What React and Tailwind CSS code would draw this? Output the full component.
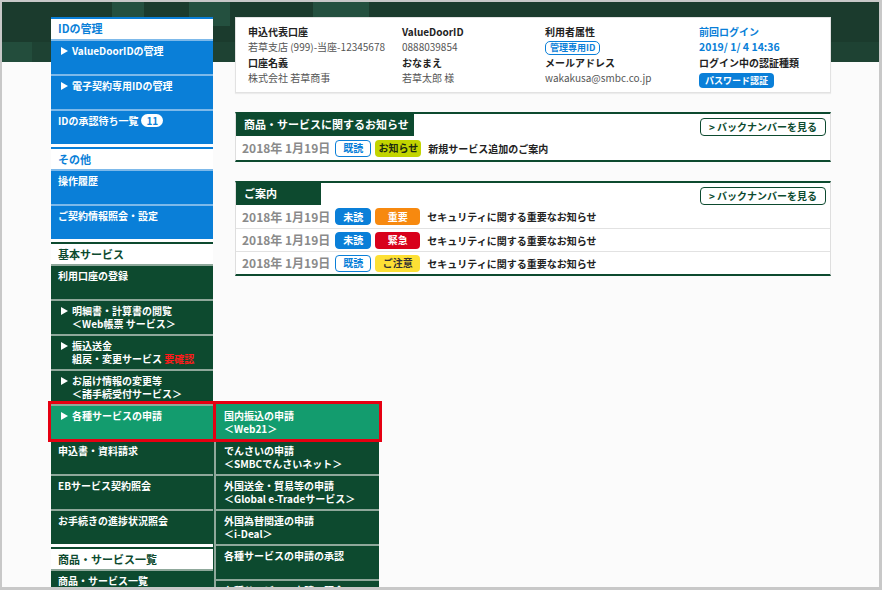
import clsx from "clsx";

function Arrow() {
  return (
    <svg width="7" height="8" viewBox="0 0 7 8" className="mt-[2.5px] shrink-0">
      <path d="M0 0 L7 4 L0 8 Z" fill="#fff" />
    </svg>
  );
}

function SectionHead({ label, tone }) {
  return (
    <div
      className={clsx(
        "mt-[3px] h-[22px] border-t-2 bg-white pl-[7px] text-[11px] font-bold leading-[20px]",
        tone === "blue" ? "border-[#0a7fd8] text-[#0a7fd8]" : "border-[#0d4a2f] text-[#0d4a2f]"
      )}
    >
      {label}
    </div>
  );
}

function NavItem({ tone = "green", arrow, active, children }) {
  return (
    <div
      className={clsx(
        "relative h-[35px] border-t-2 pt-[3px] text-[10px] font-bold leading-[13px] text-white",
        tone === "blue" ? "border-[#7db9ea] bg-[#0a7fd8]" : "border-[#8fa89b] bg-[#0d4a2f]",
        active && "z-10 bg-[#139c6e] outline-[3px] outline-[#e60012] outline-solid",
        arrow ? "flex gap-[4px] pl-[10px]" : "pl-[7px]"
      )}
    >
      {arrow && <Arrow />}
      <div>{children}</div>
    </div>
  );
}

function SubItem({ active, children }) {
  return (
    <div
      className={clsx(
        "relative h-[35px] border-t-2 pl-[8px] pt-[3px] text-[10px] font-bold leading-[13px] text-white",
        active
          ? "z-10 border-[#139c6e] bg-[#139c6e] outline-[3px] outline-[#e60012] outline-solid"
          : "border-[#8fa89b] bg-[#0d4a2f]"
      )}
    >
      {children}
    </div>
  );
}

function Sidebar() {
  return (
    <div className="w-[162px] shrink-0 bg-white">
      <div className="h-[22px] border-t-2 border-[#0a7fd8] bg-white pl-[7px] text-[11px] font-bold leading-[19px] text-[#0a7fd8]">
        IDの管理
      </div>
      <NavItem tone="blue" arrow>
        ValueDoorIDの管理
      </NavItem>
      <NavItem tone="blue" arrow>
        電子契約専用IDの管理
      </NavItem>
      <NavItem tone="blue">
        <span className="flex items-center gap-[3px]">
          IDの承認待ち一覧
          <span className="inline-flex h-[13px] items-center rounded-full bg-white px-[5px] text-[10px] leading-none text-[#0a7fd8]">
            11
          </span>
        </span>
      </NavItem>

      <SectionHead label="その他" tone="blue" />
      <NavItem tone="blue">操作履歴</NavItem>
      <NavItem tone="blue">ご契約情報照会・設定</NavItem>

      <SectionHead label="基本サービス" tone="green" />
      <NavItem>利用口座の登録</NavItem>
      <NavItem arrow>
        明細書・計算書の閲覧
        <br />＜Web帳票 サービス＞
      </NavItem>
      <NavItem arrow>
        振込送金
        <br />
        組戻・変更サービス <span className="text-[#ff1a1a]">要確認</span>
      </NavItem>
      <NavItem arrow>
        お届け情報の変更等
        <br />＜諸手続受付サービス＞
      </NavItem>
      <div className="relative z-10">
        <NavItem arrow active>
          各種サービスの申請
        </NavItem>
        {/* flyout */}
        <div className="absolute left-[162px] top-0 w-[166px] border-l border-[#0d4a2f] bg-[#0d4a2f]">
          <div className="border-l-2 border-[#8fa89b]">
            <SubItem active>
              国内振込の申請
              <br />＜Web21＞
            </SubItem>
            <SubItem>
              でんさいの申請
              <br />＜SMBCでんさいネット＞
            </SubItem>
            <SubItem>
              外国送金・貿易等の申請
              <br />＜Global e-Tradeサービス＞
            </SubItem>
            <SubItem>
              外国為替関連の申請
              <br />＜i-Deal＞
            </SubItem>
            <SubItem>各種サービスの申請の承認</SubItem>
            <SubItem>各種サービスの申請の照会</SubItem>
          </div>
        </div>
      </div>
      <NavItem>申込書・資料請求</NavItem>
      <NavItem>EBサービス契約照会</NavItem>
      <NavItem>お手続きの進捗状況照会</NavItem>

      <SectionHead label="商品・サービス一覧" tone="green" />
      <NavItem>商品・サービス一覧</NavItem>
    </div>
  );
}

function Field({ label, children }) {
  return (
    <div>
      <div className="text-[10px] font-bold leading-[15px] text-[#222]">{label}</div>
      <div className="h-[16px] text-[10px] leading-[15px] text-[#555]">{children}</div>
    </div>
  );
}

function InfoCard() {
  return (
    <div className="grid h-[76px] grid-cols-[154px_143px_154px_1fr] border border-[#e2e2e2] bg-white pl-[12px] pt-[6px] shadow-[0_1px_1px_rgba(0,0,0,0.06)]">
      <div>
        <Field label="申込代表口座">若草支店 (999)-当座-12345678</Field>
        <Field label="口座名義">株式会社 若草商事</Field>
      </div>
      <div>
        <Field label="ValueDoorID">0888039854</Field>
        <Field label="おなまえ">若草太郎 様</Field>
      </div>
      <div>
        <Field label="利用者属性">
          <span className="mt-[1px] inline-flex h-[14px] items-center rounded-[5px] border border-[#0a7fd8] bg-white px-[4px] text-[9px] font-bold leading-none text-[#0a7fd8]">
            管理専用ID
          </span>
        </Field>
        <Field label="メールアドレス">wakakusa@smbc.co.jp</Field>
      </div>
      <div>
        <div className="text-[10px] font-bold leading-[15px] text-[#0a7fd8]">前回ログイン</div>
        <div className="h-[16px] text-[10.5px] font-bold leading-[15px] text-[#0a7fd8]">2019/ 1/ 4 14:36</div>
        <div className="text-[10px] font-bold leading-[15px] text-[#222]">ログイン中の認証種類</div>
        <div className="h-[16px] leading-[15px]">
          <span className="inline-flex h-[15px] items-center rounded-[4px] bg-[#0a7fd8] px-[6px] text-[9px] font-bold leading-none text-white">
            パスワード認証
          </span>
        </div>
      </div>
    </div>
  );
}

const badgeStyles = {
  read: "w-[36px] border border-[#0a7fd8] bg-white text-[#0a7fd8]",
  unread: "w-[36px] border border-[#0a7fd8] bg-[#0a7fd8] text-white",
  info: "w-[46px] bg-[#c2d400] text-[#1b2a10]",
  important: "w-[45px] bg-[#f7890f] text-white",
  urgent: "w-[45px] bg-[#d8001b] text-white",
  caution: "w-[45px] bg-[#fde035] text-[#333]",
};

function Badge({ kind, children }) {
  return (
    <span
      className={clsx(
        "inline-flex h-[17px] shrink-0 items-center justify-center rounded-[4px] text-[10px] font-bold leading-none",
        badgeStyles[kind]
      )}
    >
      {children}
    </span>
  );
}

function NewsRow({ status, statusLabel, kind, kindLabel, text, first, tall }) {
  return (
    <div
      className={clsx(
        "flex items-center pl-[6px]",
        tall ? "h-[24px]" : "h-[23px]",
        !first && "border-t border-[#e2e2e2]"
      )}
    >
      <span className="whitespace-nowrap text-[12px] font-bold text-[#8a8a8a]">2018年 1月19日</span>
      <span className="ml-[5px] flex gap-[4px]">
        <Badge kind={status}>{statusLabel}</Badge>
        <Badge kind={kind}>{kindLabel}</Badge>
      </span>
      <span className="ml-[7px] whitespace-nowrap text-[10px] font-bold text-[#222]">{text}</span>
    </div>
  );
}

function NewsBox({ title, tabWidth, children }) {
  return (
    <div className="border-x border-y-2 border-x-[#dedede] border-y-[#0d4a2f] bg-white">
      <div className="flex items-start justify-between">
        <div
          className={clsx("h-[22px] bg-[#0d4a2f] pl-[8px] text-[11px] font-bold leading-[21px] text-white", tabWidth)}
        >
          {title}
        </div>
        <button className="mr-[4px] mt-[4px] h-[18px] w-[126px] rounded-[4px] border border-[#0d4a2f] bg-white text-[10px] font-bold leading-none text-[#0d4a2f]">
          &gt; バックナンバーを見る
        </button>
      </div>
      {children}
    </div>
  );
}

export default function App() {
  return (
    <div className="h-[590px] w-[882px] overflow-hidden bg-[#c8c8c8] pb-[3px] pl-[2px] pr-[3px] pt-[2px] font-['Noto_Sans_CJK_JP','Noto_Sans',sans-serif]">
      <div className="relative h-full overflow-hidden bg-[#fbfbfb]">
        {/* header band decoration */}
        <svg className="absolute left-0 top-0 h-[60px] w-full" viewBox="0 0 877 60" preserveAspectRatio="none">
          <rect x="0" y="0" width="877" height="60" fill="#1b3b2d" />
          <rect x="0" y="40" width="877" height="20" fill="#1e4233" />
          <rect x="110" y="0" width="32" height="40" fill="#24503f" />
          <rect x="187" y="0" width="41" height="24" fill="#24503f" />
          <rect x="311" y="0" width="56" height="40" fill="#24503f" />
          <rect x="0" y="40" width="30" height="20" fill="#234d3c" />
        </svg>

        <div className="relative flex pl-[49px] pt-[15px]">
          <Sidebar />
          <div className="ml-[22px] w-[596px]">
            <InfoCard />
            <div className="mt-[19px]">
              <NewsBox title="商品・サービスに関するお知らせ" tabWidth="w-[178px]">
                <NewsRow
                  first
                  tall
                  status="read"
                  statusLabel="既読"
                  kind="info"
                  kindLabel="お知らせ"
                  text="新規サービス追加のご案内"
                />
              </NewsBox>
            </div>
            <div className="mt-[19px]">
              <NewsBox title="ご案内" tabWidth="w-[85px]">
                <NewsRow
                  first
                  status="unread"
                  statusLabel="未読"
                  kind="important"
                  kindLabel="重要"
                  text="セキュリティに関する重要なお知らせ"
                />
                <NewsRow
                  status="unread"
                  statusLabel="未読"
                  kind="urgent"
                  kindLabel="緊急"
                  text="セキュリティに関する重要なお知らせ"
                />
                <NewsRow
                  status="read"
                  statusLabel="既読"
                  kind="caution"
                  kindLabel="ご注意"
                  text="セキュリティに関する重要なお知らせ"
                />
              </NewsBox>
            </div>
          </div>
        </div>
      </div>
    </div>
  );
}
